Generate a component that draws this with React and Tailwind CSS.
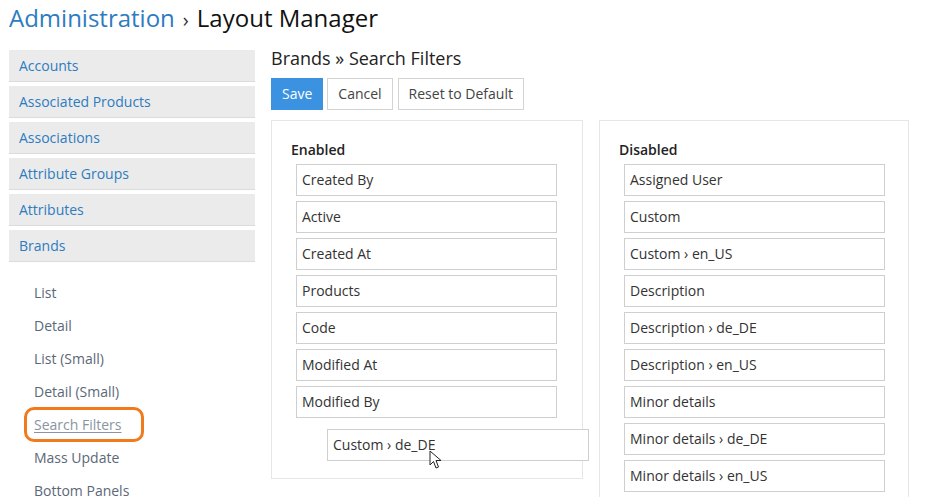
const menu = ['Accounts', 'Associated Products', 'Associations', 'Attribute Groups', 'Attributes', 'Brands'];
const layouts = ['List', 'Detail', 'List (Small)', 'Detail (Small)', 'Search Filters', 'Mass Update', 'Bottom Panels'];
const enabled = ['Created By', 'Active', 'Created At', 'Products', 'Code', 'Modified At', 'Modified By'];
const disabled = [
  'Assigned User',
  'Custom',
  'Custom › en_US',
  'Description',
  'Description › de_DE',
  'Description › en_US',
  'Minor details',
  'Minor details › de_DE',
  'Minor details › en_US',
];

const Cursor = () => (
  <svg width="14" height="20" viewBox="0 0 14 20" className="absolute left-[101px] top-[20px]">
    <path d="M1 1 L1 15 L4.5 11.5 L7 18 L9.5 17 L7 10.5 L12 10.5 Z" fill="#fff" stroke="#222" strokeWidth="1" strokeLinejoin="round" />
  </svg>
);

const Field = ({ label }) => (
  <li className="h-[32px] border border-[#cfcfcf] bg-white px-[5px] pb-[2px] flex items-center text-[14px] text-[#333]">
    {label}
  </li>
);

const App = () => {
  return (
    <div className="w-[929px] h-[497px] overflow-hidden bg-white pl-[9px] font-['Open_Sans',sans-serif]">
      <h1 className="h-[38px] pt-[2px] text-[24px] leading-[32px] text-[#111]">
        <span className="text-[#2d7cc1]">Administration</span>
        <span className="text-[#333] text-[20px] mx-[8px]">›</span>
        Layout Manager
      </h1>

      <div className="flex gap-[16px]">
        {/* Sidebar */}
        <div className="w-[246px] shrink-0 pt-[12px]">
          <div className="flex flex-col gap-[4px]">
            {menu.map((m) => (
              <div key={m} className="h-[32px] bg-[#ebebeb] border-b border-[#dcdcdc] px-[10px] flex items-center text-[14px] text-[#2d7cc1]">
                {m}
              </div>
            ))}
          </div>
          <ul className="mt-[14px] pl-[25px] flex flex-col">
            {layouts.map((l) => (
              <li key={l} className="h-[33px] flex items-center text-[14px]">
                {l === 'Search Filters' ? (
                  <span className="-ml-[10px] pl-[7px] pr-[19px] h-[35px] flex items-center rounded-[10px] border-[3px] border-[#f07a1c] text-[#8a94a0] underline underline-offset-2">
                    {l}
                  </span>
                ) : (
                  <span className="text-[#5b6877]">{l}</span>
                )}
              </li>
            ))}
          </ul>
        </div>

        {/* Main */}
        <div className="flex-1 pt-[6px]">
          <h2 className="text-[18px] leading-[28px] text-[#222]">Brands » Search Filters</h2>
          <div className="mt-[6px] flex gap-[4px] h-[32px]">
            <button className="px-[11px] pb-[2px] bg-[#3a92e0] text-white text-[14px]">Save</button>
            <button className="px-[10px] pb-[2px] border border-[#d4d4d4] text-[#444] text-[14px]">Cancel</button>
            <button className="px-[10px] pb-[2px] ml-[1px] border border-[#d4d4d4] text-[#444] text-[14px]">Reset to Default</button>
          </div>

          <div className="mt-[10px] flex gap-[16px]">
            <div className="w-[312px] h-[359px] border border-[#e6e6e6] pl-[19px] pt-[19px] relative">
              <div className="text-[14px] font-semibold text-[#222] leading-[20px] mb-[4px]">Enabled</div>
              <ul className="pl-[5px] w-[266px] flex flex-col gap-[5px]">
                {enabled.map((f) => (
                  <Field key={f} label={f} />
                ))}
              </ul>
              <div className="absolute left-[55px] top-[308px] w-[262px] h-[32px] border border-[#cfcfcf] bg-white/90 px-[5px] pb-[2px] flex items-center text-[14px] text-[#333]">
                Custom › de_DE
                <Cursor />
              </div>
            </div>

            <div className="w-[310px] h-[400px] border border-[#e6e6e6] pl-[19px] pt-[19px]">
              <div className="text-[14px] font-semibold text-[#222] leading-[20px] mb-[4px]">Disabled</div>
              <ul className="pl-[5px] w-[266px] flex flex-col gap-[5px]">
                {disabled.map((f) => (
                  <Field key={f} label={f} />
                ))}
              </ul>
            </div>
          </div>
        </div>
      </div>
    </div>
  );
};

export default App;
